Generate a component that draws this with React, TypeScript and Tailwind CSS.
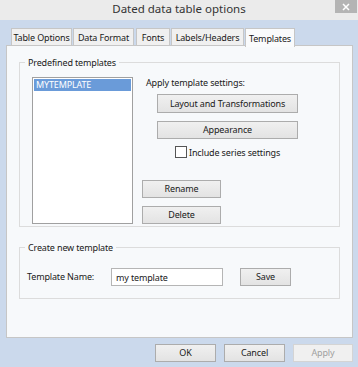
import React from "react";

const btn =
  "flex items-center justify-center whitespace-nowrap border border-[#acacac] bg-gradient-to-b from-[#f0f0f0] to-[#e3e3e3] text-[#1a1a1a]";

export default function App() {
  const tabs: [string, string][] = [
    ["Table Options", "w-[61px]"],
    ["Data Format", "w-[61px] ml-[1px]"],
    ["Fonts", "w-[34px] ml-[2px]"],
    ["Labels/Headers", "w-[73px] ml-[1px]"],
  ];
  return (
    <div
      className="w-[358px] h-[367px] bg-[#cbd9ec] flex flex-col overflow-hidden text-[9px] tracking-[-0.15px] text-[#1a1a1a] whitespace-nowrap"
      style={{ fontFamily: '"Noto Sans", "Open Sans", sans-serif' }}
    >
      {/* title bar */}
      <div className="relative h-[20px] bg-[#ebebeb] flex items-center justify-center shrink-0">
        <span className="text-[11.5px] tracking-normal text-[#333] leading-none -mt-[3px]">
          Dated data table options
        </span>
        <div className="absolute right-[1px] top-0 w-[22px] h-[13px] bg-[#b4b4b4] flex items-center justify-center">
          <svg width="8" height="8" viewBox="0 0 8 8">
            <path d="M1 1L7 7M7 1L1 7" stroke="#fff" strokeWidth="1.5" />
          </svg>
        </div>
      </div>

      <div className="pl-[6px] pr-[5px] pt-[6px] flex flex-col">
        {/* tabs */}
        <div className="flex items-end h-[19px] pl-[5px]">
          {tabs.map(([t, w]) => (
            <div
              key={t}
              className={`${w} h-[17px] border border-b-0 border-[#c6c6c6] bg-[#f0f0f0] flex items-center justify-center leading-none`}
            >
              {t}
            </div>
          ))}
          <div className="w-[50px] ml-[1px] h-[19px] border border-b-0 border-[#c6c6c6] bg-[#fafbfc] flex items-center justify-center leading-none relative top-[1px] -mb-[1px]">
            Templates
          </div>
        </div>

        {/* panel */}
        <div className="h-[293px] border border-[#c6c6c6] bg-[#f7f9fb] px-[12px] pt-[12px]">
          <fieldset className="border border-[#dcdcdc] h-[169px] pl-[12px] pr-[6px] m-0 pt-0">
            <legend className="px-[3px] -ml-[7px] leading-none">Predefined templates</legend>
            <div className="flex mt-[10px]">
              <div className="w-[101px] h-[147px] border border-[#a0a0a0] bg-white p-[1px]">
                <div className="h-[12px] bg-[#6a9bd9] text-white leading-[12px] pl-[2px]">
                  MYTEMPLATE
                </div>
              </div>
              <div className="flex flex-col ml-[9px]">
                <div className="ml-[4px] mt-[1px] leading-none">Apply template settings:</div>
                <div className={`${btn} ml-[15px] mt-[7px] w-[141px] h-[19px]`}>
                  Layout and Transformations
                </div>
                <div className={`${btn} ml-[15px] mt-[8px] w-[141px] h-[18px]`}>Appearance</div>
                <div className="flex items-center ml-[33px] mt-[7px]">
                  <div className="w-[12px] h-[12px] border border-[#555] bg-white" />
                  <span className="ml-[2px] leading-none">Include series settings</span>
                </div>
                <div className={`${btn} mt-[22px] w-[79px] h-[18px]`}>Rename</div>
                <div className={`${btn} mt-[8px] w-[79px] h-[18px]`}>Delete</div>
              </div>
            </div>
          </fieldset>

          <fieldset className="border border-[#dcdcdc] h-[56px] mt-[16px] pl-[7px] pr-[6px] m-0">
            <legend className="px-[3px] -ml-[2px] leading-none">Create new template</legend>
            <div className="flex items-center mt-[15px]">
              <div className="w-[84px] leading-none">Template Name:</div>
              <div className="w-[112px] h-[18px] border border-[#b5b5b5] bg-white flex items-center pl-[4px] leading-none mt-[1px]">
                my template
              </div>
              <div className={`${btn} ml-[17px] w-[51px] h-[18px]`}>Save</div>
            </div>
          </fieldset>
        </div>

        {/* bottom buttons */}
        <div className="flex justify-end mt-[6px] gap-[8px]">
          <div className={`${btn} w-[61px] h-[18px]`}>OK</div>
          <div className={`${btn} w-[61px] h-[18px]`}>Cancel</div>
          <div className="flex items-center justify-center border border-[#d4d4d4] bg-[#f0f0f0] text-[#a0a0a0] w-[60px] h-[18px]">
            Apply
          </div>
        </div>
      </div>
    </div>
  );
}
